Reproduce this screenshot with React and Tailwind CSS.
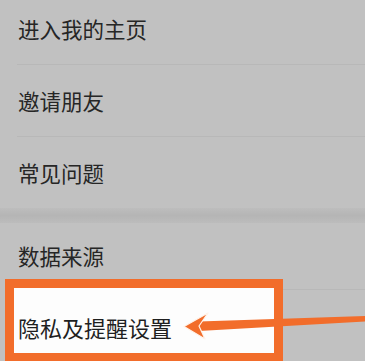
import React from 'react';

const font = { fontFamily: '"Noto Sans CJK SC", "Noto Sans", sans-serif' };

const Row = ({ label, height = 'h-[72px]', divider = true }) => (
  <div className={`${height} flex flex-col`}>
    <div className="flex-1 flex items-center pl-[18px] text-[21.5px] text-[#262626] leading-none">
      {label}
    </div>
    {divider && <div className="ml-[17px] h-px bg-[#b8b8b8]" />}
  </div>
);

const Arrow = () => (
  <svg
    className="absolute left-[180px] top-[15px]"
    width="185"
    height="40"
    viewBox="180 305 185 40"
  >
    <polygon points="199,321.5 365,316 365,321.5 199,331" fill="#f26d2b" />
    <polygon
      points="184,326.5 208,313 199,326 205,339"
      fill="#f26d2b"
      stroke="#fff3ea"
      strokeWidth="1.2"
      strokeLinejoin="round"
    />
  </svg>
);

export default function App() {
  return (
    <div className="w-[365px] h-[361px] overflow-hidden bg-[#c1c1c1]" style={font}>
      <div className="h-[65px] flex flex-col">
        <div className="flex-1 flex items-center pl-[18px] pb-[6px] text-[21.5px] text-[#262626] leading-none">
          进入我的主页
        </div>
        <div className="ml-[17px] h-px bg-[#b8b8b8]" />
      </div>
      <Row label="邀请朋友" />
      <Row label="常见问题" height="h-[71px]" divider={false} />
      <div className="h-[15px] bg-gradient-to-b from-[#bdbdbd] via-[#b5b5b5] to-[#bcbcbc]" />
      <Row label="数据来源" height="h-[67px]" />
      <div className="relative h-[71px]">
        <div className="absolute left-[5px] top-[-11px] w-[278px] h-[83px] border-[9px] border-[#f26d2b] bg-[#fdfdfd] flex items-center pl-[4px] pt-[12px] text-[22px] text-[#1f1f1f] leading-none">
          隐私及提醒设置
        </div>
        <Arrow />
      </div>
    </div>
  );
}
